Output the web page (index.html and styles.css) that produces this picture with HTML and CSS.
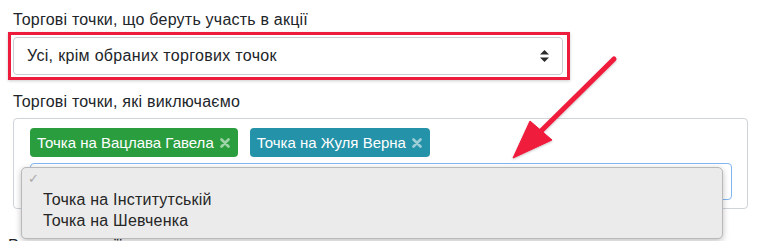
FILE: index.html
```html
<!DOCTYPE html>
<html lang="uk">
<head>
    <meta charset="UTF-8">
    <meta name="viewport" content="width=device-width, initial-scale=1.0">
    <title>Торгові точки</title>
    <link rel="stylesheet" href="styles.css">
</head>
<body>
    <div class="page">
        <label class="field-label">Торгові точки, що беруть участь в акції</label>
        <div class="highlight">
            <div class="select-box">
                <span>Усі, крім обраних торгових точок</span>
                <svg class="select-arrows" width="9" height="12" viewBox="0 0 9 12">
                    <path d="M4.5 0 L9 4.5 L0 4.5 Z" fill="#2b2b2b"/>
                    <path d="M0 7.5 L9 7.5 L4.5 12 Z" fill="#2b2b2b"/>
                </svg>
            </div>
        </div>

        <label class="field-label second">Торгові точки, які виключаємо</label>
        <div class="tags-box">
            <div class="tags">
                <span class="tag tag-green">Точка на Вацлава Гавела
                    <svg class="tag-remove" width="10" height="10" viewBox="0 0 10 10"><path d="M1.5 1.5 L8.5 8.5 M8.5 1.5 L1.5 8.5" stroke="currentColor" stroke-width="2.6" stroke-linecap="round"/></svg>
                </span>
                <span class="tag tag-blue">Точка на Жуля Верна
                    <svg class="tag-remove" width="10" height="10" viewBox="0 0 10 10"><path d="M1.5 1.5 L8.5 8.5 M8.5 1.5 L1.5 8.5" stroke="currentColor" stroke-width="2.6" stroke-linecap="round"/></svg>
                </span>
            </div>
            <div class="tag-input"></div>

            <div class="popup">
                <div class="popup-check">&#10003;</div>
                <div class="popup-item">Точка на Інститутській</div>
                <div class="popup-item">Точка на Шевченка</div>
            </div>
        </div>

        <label class="field-label bottom">Результат акції</label>
    </div>

    <svg class="pointer" width="764" height="241" viewBox="0 0 764 241">
        <defs>
            <filter id="soft" x="-20%" y="-20%" width="140%" height="140%">
                <feDropShadow dx="0" dy="1" stdDeviation="1" flood-color="#000" flood-opacity="0.25"/>
            </filter>
        </defs>
        <g filter="url(#soft)" fill="#f01a3b" stroke="#f01a3b">
            <line x1="614" y1="59" x2="538" y2="134" stroke-width="5" stroke-linecap="round"/>
            <polygon points="513,158 530,121 552,140" stroke-width="1" stroke-linejoin="round"/>
        </g>
    </svg>
</body>
</html>
```

FILE: styles.css
```css
body {
    margin: 0;
    font-family: "Liberation Sans", Arial, sans-serif;
    color: #212529;
    background: #fff;
    overflow: hidden;
}

.page {
    padding: 8px 0 0 8px;
}

.field-label {
    display: block;
    margin-left: 5px;
    font-size: 16px;
    line-height: 24px;
    letter-spacing: 0.22px;
}

.field-label.second {
    margin-top: 10px;
    margin-bottom: 4px;
}

.field-label.bottom {
    margin-left: 0;
    margin-top: 25px;
}

.highlight {
    width: 550px;
    padding: 2px 4px 2px 2px;
    border: 3px solid #ee1c3c;
    box-shadow: 0 1px 3px rgba(0, 0, 0, 0.2);
}

.select-box {
    height: 36px;
    border: 1px solid #c9ced4;
    border-radius: 4px;
    padding: 0 13px 0 13px;
    display: flex;
    align-items: center;
    justify-content: space-between;
    font-size: 16px;
    letter-spacing: 0.32px;
}

.tags-box {
    position: relative;
    width: 702px;
    margin-left: 5px;
    padding: 9px 15px 8px 16px;
    border: 1px solid #ced4da;
    border-radius: 4px;
}

.tags {
    display: flex;
    gap: 12px;
    height: 29px;
}

.tag {
    display: flex;
    align-items: center;
    gap: 6px;
    padding: 0 8px 0 7px;
    border-radius: 4px;
    color: #fff;
    font-size: 15px;
    line-height: 29px;
}

.tag-green {
    background: #2a9d3f;
}

.tag-blue {
    background: #2492a8;
}

.tag-remove {
    color: rgba(255, 255, 255, 0.55);
}

.tag-input {
    margin-top: 6px;
    height: 35px;
    border: 1px solid #80b7f2;
    border-radius: 4px;
}

.popup {
    position: absolute;
    left: 7px;
    top: 48px;
    width: 700px;
    height: 70px;
    background: #ebebeb;
    border: 1px solid #b9b9b9;
    border-radius: 5px;
    box-shadow: 0 2px 6px rgba(0, 0, 0, 0.25);
    font-size: 16px;
    letter-spacing: 0.2px;
    color: #262626;
}

.popup-check {
    height: 21px;
    padding-left: 6px;
    line-height: 22px;
    font-size: 13px;
    color: #a9a9a9;
    font-family: "DejaVu Sans", sans-serif;
}

.popup-item {
    padding-left: 21px;
    line-height: 21px;
}

.pointer {
    position: absolute;
    left: 0;
    top: 0;
    pointer-events: none;
}
```
